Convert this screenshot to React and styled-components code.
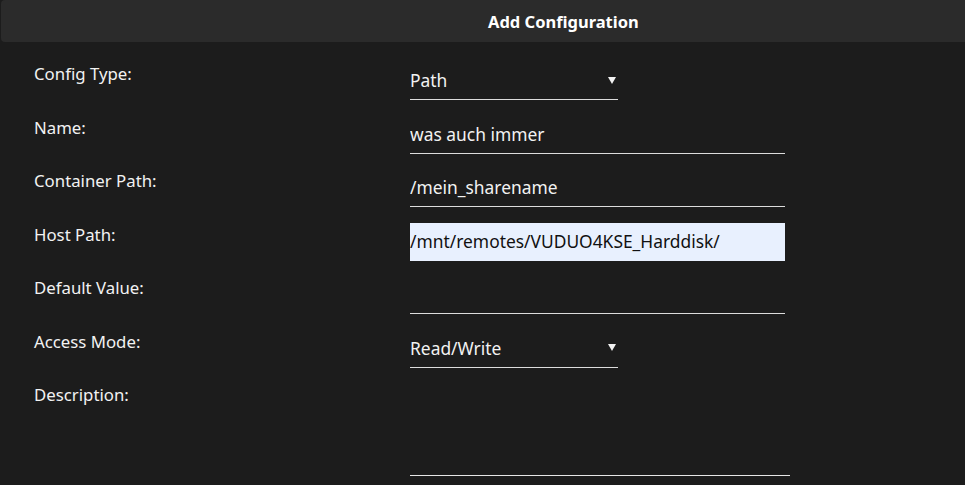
import styled, { createGlobalStyle } from "styled-components";

const GlobalStyle = createGlobalStyle`
  html, body {
    margin: 0;
    padding: 0;
    background: #1c1c1c;
    overflow: hidden;
  }
  body {
    font-family: "Noto Sans", "Liberation Sans", sans-serif;
    color: #f2f2f2;
  }
`;

const Dialog = styled.div`
  width: 965px;
  height: 485px;
  background: #1c1c1c;
`;

const TitleBar = styled.div`
  height: 42px;
  margin-left: 1px;
  margin-right: -20px;
  background: #2b2b2b;
  border-radius: 4px;
  display: flex;
  align-items: center;
  padding-left: 487px;
  font-size: 16.5px;
  font-weight: 700;
  color: #ffffff;
`;

const Form = styled.div`
  padding: 20px 0 0 34px;
  display: flex;
  flex-direction: column;
  gap: 15.5px;
`;

const Row = styled.div`
  display: flex;
  align-items: flex-start;
`;

const Label = styled.div`
  width: 376px;
  flex-shrink: 0;
  font-size: 16.8px;
  line-height: 24px;
  color: #f2f2f2;
`;

const TextInput = styled.input`
  box-sizing: border-box;
  width: 375px;
  height: 38px;
  margin: 0;
  padding: 0 0 1px;
  border: none;
  border-bottom: 1px solid ${(p) => (p.$filled ? "transparent" : "#dcdcdc")};
  border-radius: 0;
  outline: none;
  background: ${(p) => (p.$filled ? "#e8f0fe" : "transparent")};
  color: ${(p) => (p.$filled ? "#111111" : "#f2f2f2")};
  font-family: inherit;
  font-size: 17.4px;
`;

const SelectBox = styled.div`
  box-sizing: border-box;
  width: 208px;
  height: 38px;
  display: flex;
  align-items: center;
  justify-content: space-between;
  padding: 0 1px 1px 0;
  border-bottom: 1px solid #dcdcdc;
  font-size: 17.4px;
  color: #f2f2f2;
`;

const Arrow = styled.span`
  width: 0;
  height: 0;
  border-left: 4px solid transparent;
  border-right: 4px solid transparent;
  border-top: 7px solid #f2f2f2;
  margin-right: 1px;
`;

const TextArea = styled.textarea`
  box-sizing: border-box;
  width: 380px;
  height: 93px;
  margin: 0;
  padding: 0;
  border: none;
  border-bottom: 1px solid #e6e6e6;
  background: transparent;
  resize: none;
  outline: none;
  color: #f2f2f2;
  font-family: inherit;
  font-size: 17.4px;
`;

const Select = ({ value }) => (
  <SelectBox>
    <span>{value}</span>
    <Arrow />
  </SelectBox>
);

export default function App() {
  return (
    <>
      <GlobalStyle />
      <Dialog>
        <TitleBar>Add Configuration</TitleBar>
        <Form>
          <Row>
            <Label>Config Type:</Label>
            <Select value="Path" />
          </Row>
          <Row>
            <Label>Name:</Label>
            <TextInput readOnly value="was auch immer" />
          </Row>
          <Row>
            <Label>Container Path:</Label>
            <TextInput readOnly value="/mein_sharename" />
          </Row>
          <Row>
            <Label>Host Path:</Label>
            <TextInput readOnly $filled value="/mnt/remotes/VUDUO4KSE_Harddisk/" />
          </Row>
          <Row>
            <Label>Default Value:</Label>
            <TextInput readOnly value="" />
          </Row>
          <Row>
            <Label>Access Mode:</Label>
            <Select value="Read/Write" />
          </Row>
          <Row>
            <Label>Description:</Label>
            <TextArea readOnly value="" />
          </Row>
        </Form>
      </Dialog>
    </>
  );
}
